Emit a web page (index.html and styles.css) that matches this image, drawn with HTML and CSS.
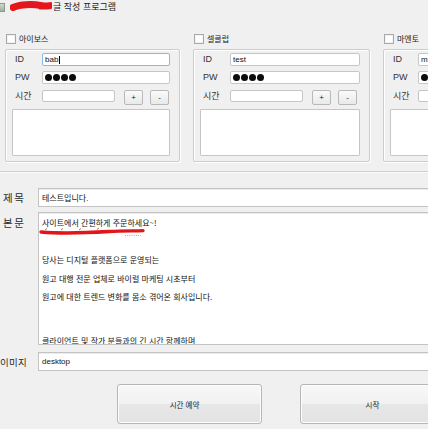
FILE: index.html
```html
<!DOCTYPE html>
<html lang="ko">
<head>
<meta charset="utf-8">
<title>글 작성 프로그램</title>
<link rel="stylesheet" href="styles.css">
</head>
<body>
<div class="titlebar">
  <span class="appicon"></span>
  <svg class="redact-title" width="42" height="12" viewBox="0 0 42 12"><path d="M3 6.5 C 10 3.2, 22 2.8, 32 4.8 C 35 5.4, 37 5.2, 40 4.6" stroke="#e3171c" stroke-width="7" fill="none" stroke-linecap="round"/><path d="M30 7.5 L41.5 5.5" stroke="#e3171c" stroke-width="2" fill="none" stroke-linecap="round"/></svg>
  <span class="title-text">글 작성 프로그램</span>
</div>

<div class="top">
  <div class="col">
    <div class="chkrow"><span class="chk"></span><span>아이보스</span></div>
    <div class="grp">
      <div class="row r-id"><span class="lbl">ID</span><div class="field focus">bab<span class="caret"></span></div></div>
      <div class="row r-pw"><span class="lbl">PW</span><div class="field"><span class="dots"><i></i><i></i><i></i><i></i></span></div></div>
      <div class="row r-time"><span class="lbl ko">시간</span><div class="field tfield"></div><div class="mini">+</div><div class="mini m2">-</div></div>
      <div class="memo"></div>
    </div>
  </div>
  <div class="col">
    <div class="chkrow"><span class="chk"></span><span>셀클럽</span></div>
    <div class="grp">
      <div class="row r-id"><span class="lbl">ID</span><div class="field">test</div></div>
      <div class="row r-pw"><span class="lbl">PW</span><div class="field"><span class="dots"><i></i><i></i><i></i><i></i></span></div></div>
      <div class="row r-time"><span class="lbl ko">시간</span><div class="field tfield"></div><div class="mini">+</div><div class="mini m2">-</div></div>
      <div class="memo"></div>
    </div>
  </div>
  <div class="col last">
    <div class="chkrow"><span class="chk"></span><span>마엔토</span></div>
    <div class="grp">
      <div class="row r-id"><span class="lbl">ID</span><div class="field">m</div></div>
      <div class="row r-pw"><span class="lbl">PW</span><div class="field"><span class="dots"><i></i></span></div></div>
      <div class="row r-time"><span class="lbl ko">시간</span><div class="field tfield"></div></div>
      <div class="memo"></div>
    </div>
  </div>
</div>
<div class="sep"></div>

<div class="bottom">
  <div class="frow r-subject">
    <span class="flabel">제목</span>
    <div class="box">테스트입니다.</div>
  </div>
  <div class="frow r-body">
    <span class="flabel">본문</span>
    <div class="box area">
      <div class="ln">사이트에서 간편하게 주문하세요~!</div>
      <div class="ln"></div>
      <div class="ln">당사는 디지털 플랫폼으로 운영되는</div>
      <div class="ln">원고 대행 전문 업체로 바이럴 마케팅 시초부터</div>
      <div class="ln">원고에 대한 트렌드 변화를 몸소 겪어온 회사입니다.</div>
      <div class="gapline"></div>
      <div class="ln">클라이언트 및 작가 분들과의 긴 시간 함께하며</div>
      <svg class="redact-body" width="108" height="12" viewBox="0 0 108 12"><path d="M2 5 C 20 6.5, 45 6, 70 4.5 C 85 3.6, 96 4, 104 3.6" stroke="#e0161b" stroke-width="3.4" fill="none" stroke-linecap="round"/><path d="M6 3 L8 1.5 M22 3 L24 1.5 M40 3 L42 1.5 M58 2.5 L60 1" stroke="#b04040" stroke-width="0.8"/><path d="M86 8.5 L102 8.5" stroke="#9a9a9a" stroke-width="0.8" stroke-dasharray="1 1.2"/></svg>
    </div>
  </div>
  <div class="frow r-image">
    <span class="flabel img">이미지</span>
    <div class="box">desktop</div>
  </div>
  <div class="btnrow">
    <div class="btn b1">시간 예약</div>
    <div class="btn b2">시작</div>
  </div>
</div>
</body>
</html>
```

FILE: styles.css
```css
* { box-sizing: border-box; }
html, body { margin: 0; padding: 0; }
body {
  width: 428px;
  height: 429px;
  overflow: hidden;
  background: #f0f0f0;
  font-family: "Liberation Sans", "Noto Sans CJK KR", sans-serif;
  color: #1c1c1c;
}

/* title bar */
.titlebar {
  height: 18px;
  display: flex;
  align-items: flex-start;
  padding-top: 1px;
  position: relative;
}
.appicon {
  width: 5px;
  height: 9px;
  margin-top: 2px;
  background: linear-gradient(#cfd8cf, #9fb09f);
  border: 1px solid #8a9a8a;
  border-left: none;
}
.redact-title { margin-left: 5px; }
.title-text {
  font-family: "Noto Sans CJK KR", sans-serif;
  font-size: 9px;
  line-height: 12px;
  margin-left: 1px;
  color: #222;
}

/* top accounts */
.top {
  display: flex;
  gap: 13px;
  padding-left: 5px;
  height: 153px;
}
.col { width: 175px; flex: none; }
.col + .col { width: 177px; }
.col.last { width: 45px; overflow: hidden; }
.col.last .chkrow, .col.last .grp { width: 177px; }
.col.last .lbl { width: 28px; }
.chkrow {
  margin-top: 16px;
  height: 10px;
  display: flex;
  align-items: center;
  gap: 3px;
  margin-left: 1px;
  font-family: "Noto Sans CJK KR", sans-serif;
  font-size: 8px;
  line-height: 10px;
  color: #222;
}
.chk {
  width: 10px;
  height: 10px;
  background: #fff;
  border: 1px solid #a9a9a9;
  box-shadow: inset 0 0 0 1px #f2f2f2;
}
.grp {
  margin-top: 5px;
  height: 113px;
  border: 1px solid #cdcdcd;
  box-shadow: inset 1px 1px 0 #fff, 1px 1px 0 #fff;
  border-radius: 2px;
  padding: 3px 9px 0 6px;
  display: flex;
  flex-direction: column;
}
.row { display: flex; align-items: center; }
.r-id { height: 13px; }
.r-pw { height: 13px; margin-top: 5px; }
.r-time { height: 15px; margin-top: 6px; align-items: flex-start; }
.lbl {
  width: 30px;
  flex: none;
  padding-left: 3px;
  font-size: 9px;
  line-height: 13px;
  color: #333;
}
.lbl.ko { font-family: "Noto Sans CJK KR", sans-serif; font-size: 9px; line-height: 12px; }
.field {
  flex: 1;
  height: 100%;
  background: #fff;
  border: 1px solid #c6c6c6;
  border-radius: 2px;
  font-family: "Liberation Sans", "Noto Sans CJK KR", sans-serif;
  font-size: 8px;
  line-height: 11px;
  padding-left: 2px;
  color: #111;
  display: flex;
  align-items: center;
  white-space: nowrap;
  overflow: hidden;
}
.field.focus { border-color: #86b8e8; }
.caret { width: 1px; height: 8px; background: #000; margin-left: 0.5px; }
.tfield { flex: none; width: 73px; height: 12px; }
.dots { display: flex; gap: 1px; }
.dots i { display: block; width: 7px; height: 7px; border-radius: 50%; background: #0c0c0c; }
.mini {
  flex: none;
  width: 19px;
  height: 15px;
  margin-left: 9px;
  border: 1px solid #b9b9b9;
  border-radius: 2px;
  background: linear-gradient(#fafafa, #e9e9e9);
  font-size: 8px;
  line-height: 13px;
  text-align: center;
  color: #222;
}
.mini.m2 { margin-left: 7px; }
.memo {
  margin-top: 4px;
  height: 47px;
  background: #fff;
  border: 1px solid #c6c6c6;
  border-radius: 1px;
}

.sep {
  height: 2px;
  border-top: 1px solid #cfcfcf;
  border-bottom: 1px solid #fafafa;
}

/* bottom form */
.bottom { padding-top: 15px; }
.frow { display: flex; }
.flabel {
  width: 38px;
  flex: none;
  padding-left: 3px;
  font-family: "Noto Sans CJK KR", sans-serif;
  font-size: 10.5px;
  letter-spacing: 1.5px;
  line-height: 12px;
  color: #2a2a2a;
}
.flabel.img { font-size: 9.5px; letter-spacing: 0.3px; padding-left: 0; }
.box {
  width: 393px;
  flex: none;
  background: #fff;
  border: 1px solid #c3c3c3;
  border-right: none;
  box-shadow: inset 0 1px 0 #ececec;
  font-family: "Liberation Sans", "Noto Sans CJK KR", sans-serif;
  font-size: 8px;
  color: #111;
  padding-left: 3px;
  display: flex;
  align-items: center;
}
.r-subject { height: 19px; align-items: center; }
.r-subject .box { height: 19px; }
.r-body { margin-top: 5px; }
.r-body .flabel { padding-top: 5px; }
.area {
  height: 133px;
  display: block;
  position: relative;
  padding-top: 1px;
  overflow: hidden;
  font-family: "Noto Sans CJK KR", sans-serif;
}
.ln { height: 18.5px; line-height: 18.5px; white-space: nowrap; }
.gapline { height: 25.5px; }
.redact-body { position: absolute; left: 0; top: 14px; }
.r-image { margin-top: 7px; height: 19px; align-items: center; }
.r-image .box { height: 19px; }

.btnrow {
  margin-top: 13px;
  display: flex;
  gap: 38px;
  padding-left: 117px;
}
.btn {
  flex: none;
  width: 145px;
  height: 40px;
  border: 1px solid #b7b7b7;
  border-radius: 3px;
  background: linear-gradient(#f8f8f8 0%, #f1f1f1 50%, #e7e7e7 51%, #e3e3e3 100%);
  box-shadow: inset 0 0 0 1px #fcfcfc;
  font-family: "Noto Sans CJK KR", sans-serif;
  font-size: 7.5px;
  color: #222;
  display: flex;
  align-items: center;
  justify-content: center;
}
.b1 { padding-right: 10px; }
```
